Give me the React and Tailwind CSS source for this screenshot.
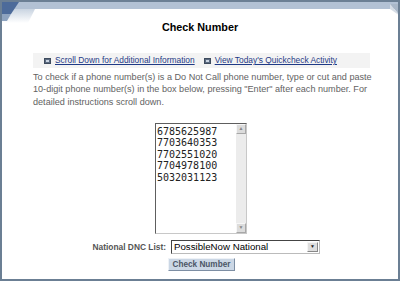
import React from "react";

const numbers = ["6785625987", "7703640353", "7702551020", "7704978100", "5032031123"];

function Bullet() {
  return (
    <span className="inline-block shrink-0 w-[7px] h-[6px] bg-[#5b6a80] border border-[#3e4b5e] mr-[4px]">
      <span className="block w-[3px] h-[2px] bg-[#c9d3e0] mx-auto mt-[1px]" />
    </span>
  );
}

function Header() {
  return (
    <svg className="absolute left-0 top-0" width="400" height="26" viewBox="0 0 400 26">
      <defs>
        <linearGradient id="fade" x1="0" y1="0" x2="0" y2="1">
          <stop offset="0" stopColor="#c9d4e1" />
          <stop offset="1" stopColor="#ffffff" />
        </linearGradient>
      </defs>
      <rect x="0" y="0" width="400" height="7" fill="#b2c1d4" />
      <polygon points="0,7 33,7 26,21 0,21" fill="url(#fade)" />
      <polygon points="0,0 17,0 9,12 0,12" fill="#4d6b9a" />
      <polygon points="0,12 9,12 5,19 0,19" fill="#8ea3bf" />
      <polygon points="388,2 398,2 398,14" fill="#a9b7c8" />
      <polygon points="388,2 398,14 388,7" fill="#d6dde6" />
    </svg>
  );
}

export default function App() {
  return (
    <div
      className="w-[400px] h-[281px] relative overflow-hidden bg-white border-2 border-[#6b7f94] box-border"
      style={{ fontFamily: '"Liberation Sans", Arial, sans-serif' }}
    >
      <Header />
      <div className="relative pt-[19px]">
        {/* title */}
        <div className="text-center text-[10.8px] font-bold text-black leading-[13px]">Check Number</div>

        {/* link bar */}
        <div className="mt-[19px] ml-[31px] mr-[28px] h-[15px] bg-[#f3f3f3] flex items-center pl-[11px] whitespace-nowrap text-[8.4px] text-[#1f3a86]">
          <Bullet />
          <span className="underline">Scroll Down for Additional Information</span>
          <span className="w-[9px] shrink-0" />
          <Bullet />
          <span className="underline">View Today's Quickcheck Activity</span>
        </div>

        {/* instructions */}
        <p className="mt-[3px] ml-[31px] mr-[22px] text-[9.1px] leading-[12.3px] text-[#626262]">
          To check if a phone number(s) is a Do Not Call phone number, type or cut and paste 10-digit phone number(s) in the box below, pressing "Enter" after each number. For detailed instructions scroll down.
        </p>

        {/* textarea */}
        <div className="mt-[15px] ml-[153px] w-[92px] h-[111px] border border-[#5e5e5e] border-r-[#c8c8c8] border-b-[#c8c8c8] flex bg-white">
          <div
            className="flex-1 pl-[1px] pt-[2px] text-[10px] leading-[11.5px] text-[#222]"
            style={{ fontFamily: '"DejaVu Sans Mono", monospace' }}
          >
            {numbers.map((n) => (
              <div key={n}>{n}</div>
            ))}
          </div>
          <div className="w-[10px] bg-[#ececec] flex flex-col justify-between">
            <div className="h-[10px] bg-[#dcdcdc] border border-[#f7f7f7] border-r-[#a8a8a8] border-b-[#a8a8a8] flex items-center justify-center text-[5px] text-[#888]">▲</div>
            <div className="h-[10px] bg-[#dcdcdc] border border-[#f7f7f7] border-r-[#a8a8a8] border-b-[#a8a8a8] flex items-center justify-center text-[5px] text-[#888]">▼</div>
          </div>
        </div>

        {/* select row */}
        <div className="mt-[6px] flex items-center">
          <div className="w-[167px] text-right pr-[3px] text-[8.4px] font-bold text-[#555] leading-[12px]">National DNC List:</div>
          <div className="ml-[2px] w-[149px] h-[14px] border border-[#444] border-r-[#bbb] border-b-[#bbb] flex items-center bg-white">
            <span className="flex-1 pl-[2px] text-[9.7px] text-black leading-[12px]">PossibleNow National</span>
            <div className="w-[11px] h-[10px] mr-[1px] bg-[#dedede] border border-[#f5f5f5] border-r-[#888] border-b-[#888] flex items-center justify-center text-[5px] text-[#222]">▼</div>
          </div>
        </div>

        {/* button */}
        <div className="mt-[4px] ml-[166px]">
          <button className="block w-[67px] h-[13px] bg-[#cbd7e5] border border-[#eef2f7] border-r-[#7d8ea3] border-b-[#7d8ea3] text-[8.2px] font-bold text-[#4a5566] leading-[11px]">
            Check Number
          </button>
        </div>
      </div>
    </div>
  );
}
